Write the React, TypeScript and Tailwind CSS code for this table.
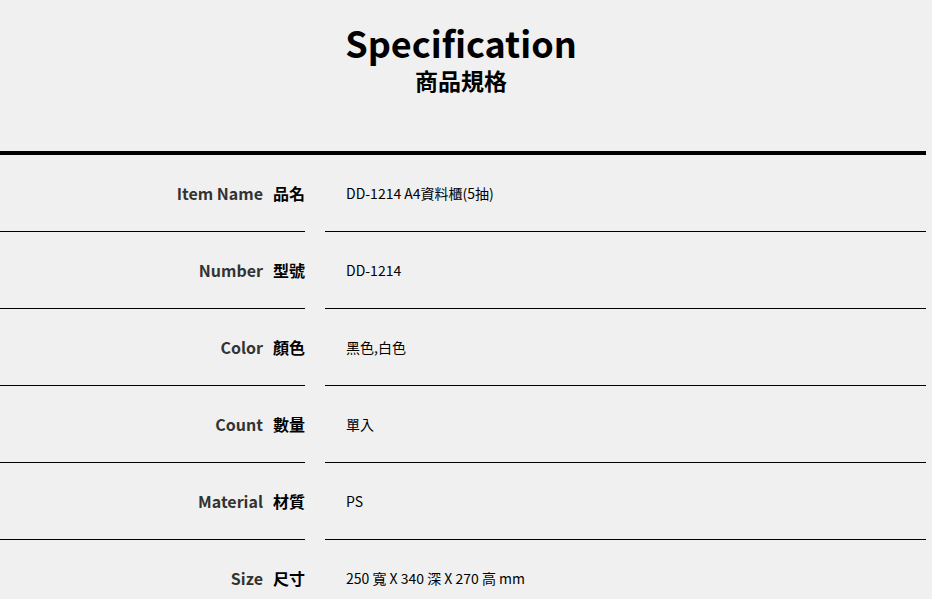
import React from "react";

const rows: [string, string, string][] = [
  ["Item Name", "品名", "DD-1214 A4資料櫃(5抽)"],
  ["Number", "型號", "DD-1214"],
  ["Color", "顏色", "黑色,白色"],
  ["Count", "數量", "單入"],
  ["Material", "材質", "PS"],
  ["Size", "尺寸", "250 寬 X 340 深 X 270 高 mm"],
];

export default function App() {
  return (
    <div
      className="min-h-[599px] w-full bg-[#f0f0f0] text-black"
      style={{ fontFamily: '"Noto Sans CJK TC", "Noto Sans", sans-serif' }}
    >
      <div className="w-[926px]">
        <div className="flex flex-col items-center pr-[4px] pt-[20px]">
          <h1 className="text-[36px] font-bold leading-[44px]">Specification</h1>
          <h2 className="mt-[1px] text-[23px] font-bold leading-[30px]">商品規格</h2>
        </div>
        <div className="mt-[56px] border-t-4 border-black">
          {rows.map(([en, zh, val]) => (
            <div key={en} className="flex h-[77px]">
              <div className="flex w-[305px] items-center justify-end border-b border-black">
                <span className="text-[16px] font-bold text-[#333]">{en}</span>
                <span className="ml-[10px] text-[16px] font-bold">{zh}</span>
              </div>
              <div className="ml-[20px] flex flex-1 items-center border-b border-black pl-[21px] text-[14px]">
                {val}
              </div>
            </div>
          ))}
        </div>
      </div>
    </div>
  );
}
